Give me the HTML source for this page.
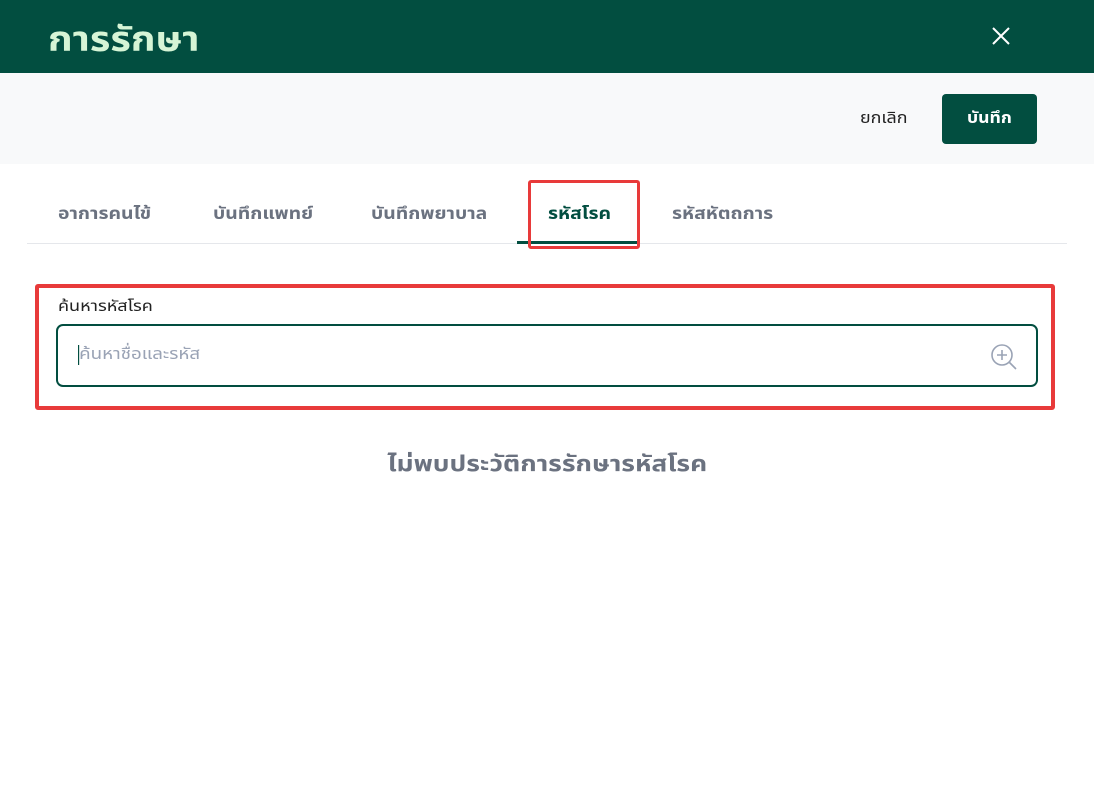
<!DOCTYPE html>
<html><head><meta charset="utf-8"><style>
*{box-sizing:border-box;margin:0;padding:0}
body{width:1094px;height:795px;background:#fff;font-family:"Liberation Sans","Noto Sans Thai",sans-serif;position:relative;overflow:hidden}
.hdr{position:absolute;left:0;top:0;width:1094px;height:73px;background:#024e40}
.title{position:absolute;left:48px;top:20px;font-size:35px;color:#d6f5d6;font-weight:bold;line-height:40px;transform:scaleX(1.13);transform-origin:left center}
.bar{position:absolute;left:0;top:73px;width:1094px;height:91px;background:#f8f9fa}
.cancel{position:absolute;left:860px;top:108px;font-size:16px;color:#222;line-height:22px;transform:scaleX(1.12);transform-origin:left center}
.save{position:absolute;left:942px;top:94px;width:95px;height:50px;background:#024e40;border-radius:4px;color:#fff;font-size:16px;font-weight:bold;text-align:center;line-height:50px}
.save span{display:inline-block;transform:scaleX(1.1)}
.tab{position:absolute;top:203px;font-size:17px;color:#6b7280;font-weight:bold;line-height:22px;transform:scaleX(1.14);transform-origin:left center}
.line{position:absolute;left:27px;top:243px;width:1040px;height:1px;background:#e5e7eb}
.ul{position:absolute;left:517px;top:241px;width:123px;height:3px;background:#024e40}
.redtab{position:absolute;left:528px;top:180px;width:112px;height:69px;border:3px solid #e83a3a;border-radius:3px}
.redbox{position:absolute;left:35px;top:284px;width:1020px;height:126px;border:4px solid #e83a3a;border-radius:3px}
.lbl{position:absolute;left:58px;top:297px;font-size:15px;color:#222;line-height:20px;transform:scaleX(1.2);transform-origin:left center}
.inp{position:absolute;left:56px;top:324px;width:982px;height:63px;border:2px solid #024e40;border-radius:7px}
.ph{position:absolute;left:78px;top:345px;font-size:16px;color:#9aa3b5;line-height:20px;border-left:1px solid #024e40;transform:scaleX(1.17);transform-origin:left center}
.empty{position:absolute;left:0;width:1094px;top:450px;text-align:center;font-size:22px;color:#6b7280;font-weight:bold;line-height:28px}
.empty span{display:inline-block;transform:scaleX(1.2)}
</style></head><body>
<div class="hdr"></div>
<div class="title">การรักษา</div>
<svg style="position:absolute;left:991px;top:26px" width="20" height="20" viewBox="0 0 20 20"><path d="M2 2L18 18M18 2L2 18" stroke="#fff" stroke-width="2"/></svg>
<div class="bar"></div>
<div class="cancel">ยกเลิก</div>
<div class="save"><span>บันทึก</span></div>
<div class="tab" style="left:58px">อาการคนไข้</div>
<div class="tab" style="left:213px">บันทึกแพทย์</div>
<div class="tab" style="left:371px">บันทึกพยาบาล</div>
<div class="tab" style="left:548px;color:#024e40">รหัสโรค</div>
<div class="tab" style="left:672px">รหัสหัตถการ</div>
<div class="line"></div>
<div class="ul"></div>
<div class="redtab"></div>
<div class="redbox"></div>
<div class="lbl">ค้นหารหัสโรค</div>
<div class="inp"></div>
<div class="ph">ค้นหาชื่อและรหัส</div>
<svg style="position:absolute;left:990px;top:343px" width="28" height="28" viewBox="0 0 28 28"><circle cx="12" cy="12" r="10" fill="none" stroke="#9aa3b5" stroke-width="1.6"/><path d="M12 7v10M7 12h10M19.5 19.5L26 26" stroke="#9aa3b5" stroke-width="1.6"/></svg>
<div class="empty"><span>ไม่พบประวัติการรักษารหัสโรค</span></div>
</body></html>
